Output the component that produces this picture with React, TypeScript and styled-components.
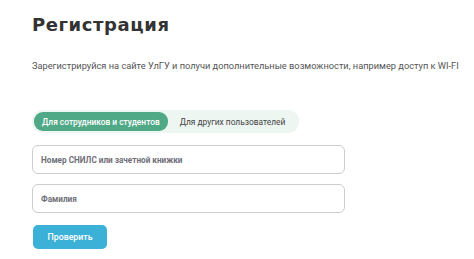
import styled, { createGlobalStyle } from "styled-components"
import { useState } from "react"

const Global = createGlobalStyle`
  body {
    margin: 0;
    background: #ffffff;
    font-family: "Roboto", "Liberation Sans", sans-serif;
  }
`

const tabs = ["Для сотрудников и студентов", "Для других пользователей"]

const App = () => {
  const [active, setActive] = useState(0)
  return (
    <S.Page>
      <Global />
      <S.Title>Регистрация</S.Title>
      <S.Lead>
        Зарегистрируйся на сайте УлГУ и получи дополнительные возможности, например доступ к WI-FI
      </S.Lead>
      <S.Tabs>
        {tabs.map((t, i) => (
          <S.Tab key={t} $active={i === active} onClick={() => setActive(i)}>
            {t}
          </S.Tab>
        ))}
      </S.Tabs>
      <S.Form>
        <S.Input placeholder="Номер СНИЛС или зачетной книжки" />
        <S.Input placeholder="Фамилия" />
        <S.Button>Проверить</S.Button>
      </S.Form>
    </S.Page>
  )
}

const S = {
  Page: styled.div`
    width: 474px;
    height: 259px;
    padding: 13px 0 0 32px;
    box-sizing: border-box;
    display: flex;
    flex-direction: column;
  `,
  Title: styled.h1`
    margin: 0;
    font-family: "DejaVu Sans", sans-serif;
    font-size: 18px;
    font-weight: bold;
    letter-spacing: 0.6px;
    color: #333333;
    line-height: 24px;
  `,
  Lead: styled.p`
    margin: 22px 0 0;
    font-size: 9.25px;
    line-height: 14px;
    color: #555555;
    white-space: nowrap;
  `,
  Tabs: styled.div`
    margin-top: 37px;
    align-self: flex-start;
    display: flex;
    padding: 2px;
    border-radius: 11px;
    background: #eef6f2;
  `,
  Tab: styled.button<{ $active: boolean }>`
    border: none;
    height: 19px;
    padding: 0 ${(p) => (p.$active ? 8 : 12)}px;
    border-radius: 9px;
    font-family: "Roboto", "Liberation Sans", sans-serif;
    font-size: 8.4px;
    font-weight: ${(p) => (p.$active ? 500 : 400)};
    cursor: pointer;
    background: ${(p) => (p.$active ? "#4fa886" : "transparent")};
    color: ${(p) => (p.$active ? "#ffffff" : "#444444")};
  `,
  Form: styled.div`
    margin-top: 12px;
    display: flex;
    flex-direction: column;
    align-items: flex-start;
    gap: 10px;
  `,
  Input: styled.input`
    width: 313px;
    height: 29px;
    box-sizing: border-box;
    border: 1px solid #cccccc;
    border-radius: 6px;
    padding: 0 8px;
    font-family: "Roboto", "Liberation Sans", sans-serif;
    font-size: 8.2px;
    font-weight: bold;
    outline: none;
    &::placeholder {
      color: #6f6f78;
    }
  `,
  Button: styled.button`
    margin: 2px 0 0 1px;
    width: 74px;
    height: 24px;
    border: none;
    border-radius: 5px;
    background: #3cb1d8;
    color: #ffffff;
    font-family: "Roboto", "Liberation Sans", sans-serif;
    font-size: 8.8px;
    font-weight: 500;
    cursor: pointer;
  `,
}

export default App
